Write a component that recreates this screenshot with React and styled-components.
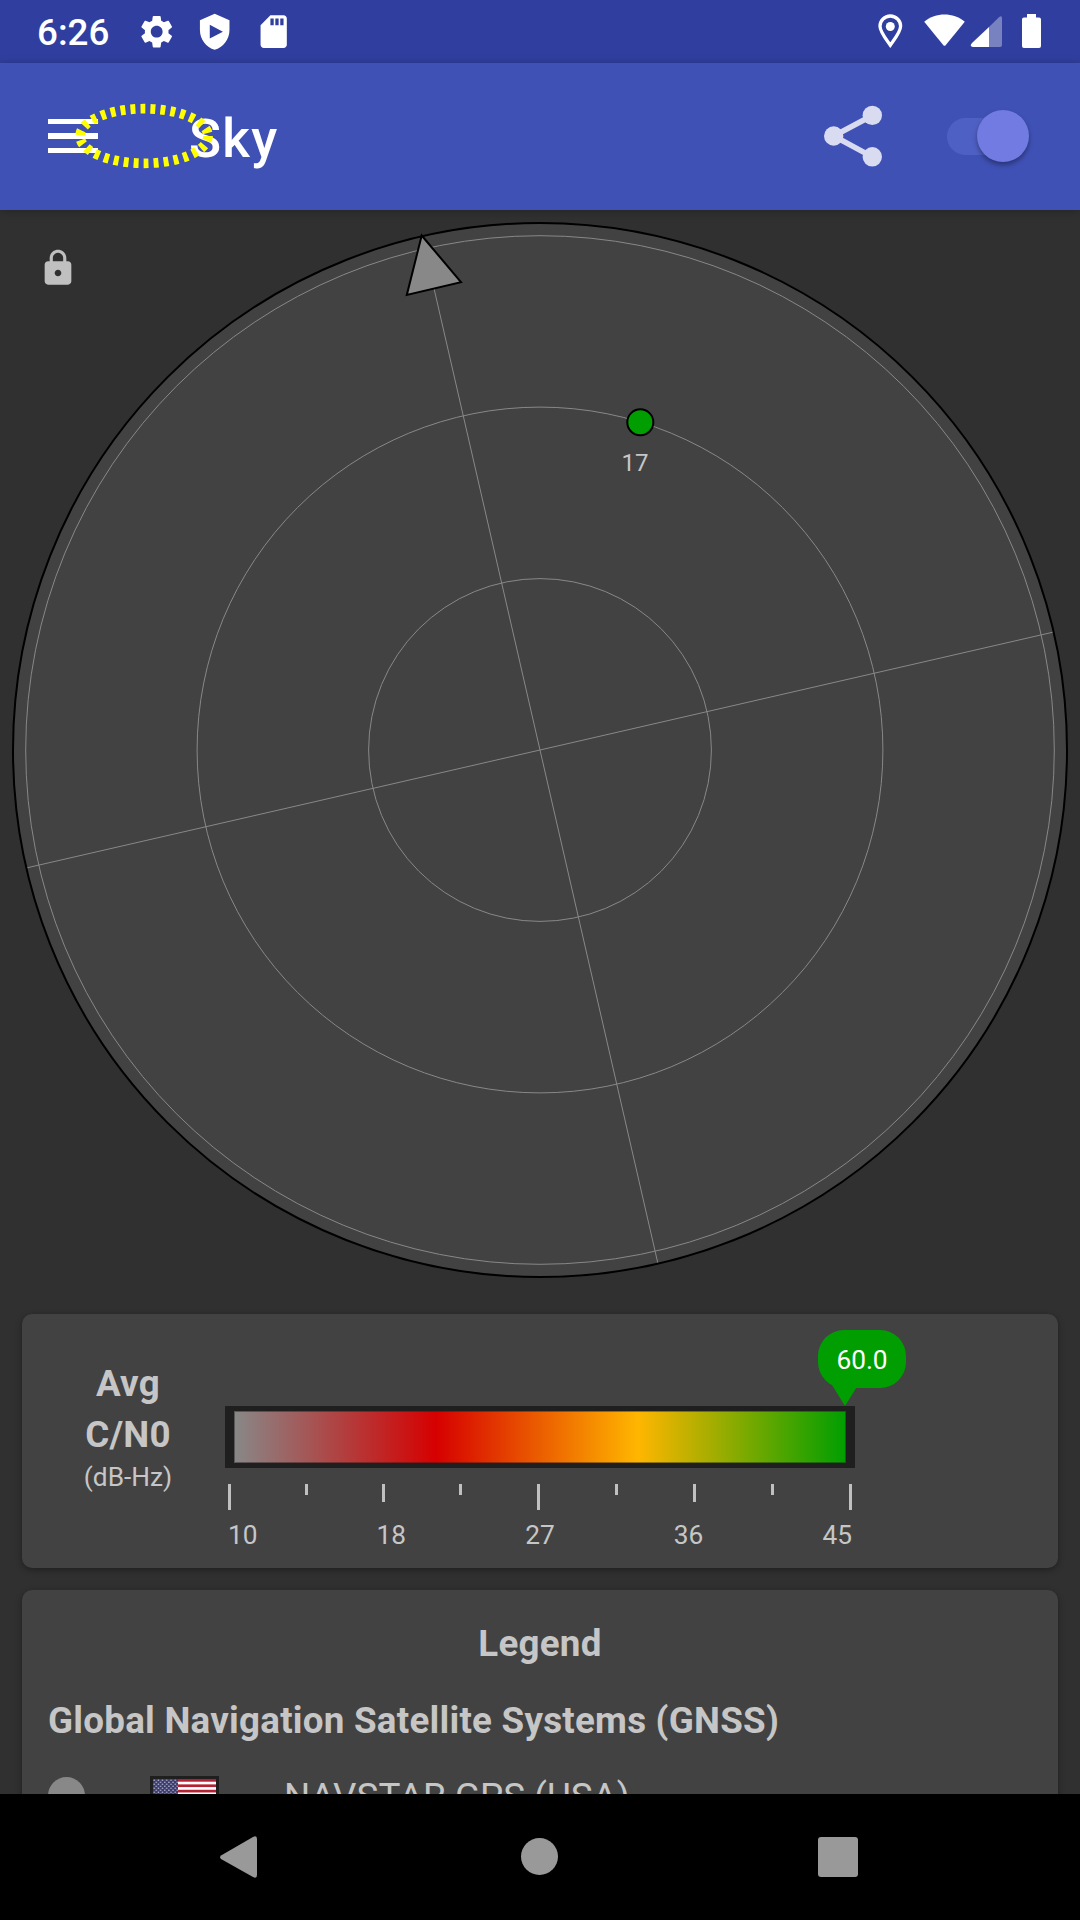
import React from "react";
import styled, { createGlobalStyle } from "styled-components";

const Global = createGlobalStyle`
  * { box-sizing: border-box; }
  body { margin: 0; background: #303030; font-family: Roboto, sans-serif; color: #c6c6c6; }
`;

const Screen = styled.div`
  width: 1080px;
  height: 1920px;
  display: flex;
  flex-direction: column;
  overflow: hidden;
  background: #303030;
`;

const StatusBar = styled.header`
  height: 63px;
  flex: none;
  display: flex;
  align-items: center;
  justify-content: space-between;
  padding: 0 37px 0 37px;
  background: #303f9f;
  color: #fff;
`;

const StatusGroup = styled.div`
  display: flex;
  align-items: center;
  gap: ${(p) => p.$gap || 0}px;
`;

const Clock = styled.span`
  font-size: 36.75px;
  font-weight: 500;
  line-height: 43px;
  width: 81px;
  padding-top: 2px;
`;

const Icon = styled.svg`
  display: block;
  flex: none;
  overflow: visible;
  width: ${(p) => p.$w}px;
  height: ${(p) => p.$h || p.$w}px;
  fill: ${(p) => p.$color || "#fff"};
`;

const AppBar = styled.nav`
  position: relative;
  z-index: 1;
  height: 147px;
  flex: none;
  display: flex;
  align-items: center;
  padding: 0 49px 1px 48px;
  background: #3f51b5;
  box-shadow: 0 1px 8px rgba(0, 0, 0, 0.25);
`;

const MenuIcon = styled.div`
  width: 50px;
  height: 34px;
  display: flex;
  flex-direction: column;
  justify-content: space-between;
`;

const MenuLine = styled.span`
  height: 5.4px;
  background: #fff;
`;

const Title = styled.h1`
  margin: 0 auto 0 91px;
  padding-top: 5px;
  font-size: 53px;
  line-height: 62px;
  font-weight: 500;
  letter-spacing: 1.2px;
  color: #fff;
`;

const Highlight = styled.svg`
  position: absolute;
  left: 70px;
  top: 35px;
  width: 150px;
  height: 76px;
`;

const Switch = styled.div`
  width: 84px;
  height: 37px;
  margin-left: 64px;
  display: flex;
  align-items: center;
  justify-content: flex-end;
  border-radius: 19px;
  background: linear-gradient(90deg, #4f60c4 0 60px, transparent 60px);
`;

const Thumb = styled.span`
  width: 52px;
  height: 52px;
  flex: none;
  margin-right: 2px;
  border-radius: 50%;
  background: #727be2;
  box-shadow: 0 3px 5px rgba(0, 0, 0, 0.35);
`;

const Content = styled.main`
  height: 1584px;
  flex: none;
  overflow: hidden;
  display: flex;
  flex-direction: column;
  gap: 22px;
`;

const SkyArea = styled.section`
  position: relative;
  height: 1082px;
  flex: none;
`;

const SkyChart = styled.svg`
  display: block;
  width: 1080px;
  height: 1080px;
`;

const LockBadge = styled.div`
  position: absolute;
  left: 38px;
  top: 38px;
`;

const Card = styled.section`
  width: 1036px;
  height: ${(p) => p.$h}px;
  flex: none;
  margin: 0 22px;
  border-radius: 10px;
  background: #424242;
  box-shadow: 0 2px 6px rgba(0, 0, 0, 0.35);
`;

const SignalCard = styled(Card)`
  display: flex;
`;

const SignalLabel = styled.div`
  width: 120px;
  margin-left: 46px;
  padding-top: 44px;
  display: flex;
  flex-direction: column;
  align-items: center;
`;

const Strong = styled.span`
  font-size: 36.75px;
  line-height: 51px;
  font-weight: 700;
  letter-spacing: 0.24px;
`;

const Unit = styled.span`
  font-size: 26.25px;
  line-height: 34px;
`;

const Meter = styled.div`
  position: relative;
  width: 630px;
  margin-left: 37px;
  padding-top: 92px;
`;

const GradientBar = styled.div`
  height: 62px;
  padding: 5px 9px;
  background: #1f1f1f;
`;

const GradientFill = styled.div`
  height: 52px;
  border: 1px solid rgba(31, 31, 31, 0.45);
  background: linear-gradient(90deg, #888 0%, #d60000 33%, #ffb600 66%, #009e00 100%) border-box;
`;

const Ticks = styled.div`
  height: 26px;
  margin: 16px 3px 0;
  display: flex;
`;

const Tick = styled.span`
  width: 3px;
  height: ${(p) => p.$h}px;
  margin-left: ${(p) => p.$gap}px;
  background: #c0c0c0;
`;

const Scale = styled.div`
  margin: 9px 3px 0 3px;
  display: flex;
  justify-content: space-between;
  font-size: 26.25px;
  line-height: 32px;
`;

const Bubble = styled.div`
  position: absolute;
  left: 593px;
  top: 16px;
  width: 88px;
  height: 58px;
  border-radius: 26px;
  background: #009e00;
  color: #fff;
  font-size: 26.25px;
  line-height: 60px;
  text-align: center;
  &::after {
    content: "";
    position: absolute;
    left: 14px;
    top: 55px;
    width: 26px;
    height: 21px;
    background: inherit;
    clip-path: polygon(0 0, 100% 0, 50% 100%);
  }
`;

const LegendCard = styled(Card)`
  padding: 32px 26px 0;
`;

const Heading = styled.h2`
  margin: 0;
  font-size: 36.75px;
  line-height: 44px;
  font-weight: 700;
  letter-spacing: 0.24px;
  text-align: ${(p) => p.$align || "left"};
  padding-bottom: ${(p) => p.$gap}px;
`;

const LegendRow = styled.div`
  display: flex;
  align-items: flex-start;
`;

const Dot = styled.span`
  width: 37px;
  height: 37px;
  margin-top: 2px;
  border-radius: 50%;
  background: #888;
`;

const Flag = styled.svg`
  width: 69px;
  height: 41px;
  margin: 1px 65px 0 65px;
  border: 3px solid #1f1f1f;
`;

const LegendText = styled.span`
  font-size: 36.75px;
  line-height: 44px;
  letter-spacing: 0.06px;
`;

const NavBar = styled.footer`
  height: 126px;
  flex: none;
  display: flex;
  align-items: center;
  justify-content: space-between;
  padding: 0 222px 1px 220px;
  background: #000;
`;

const HomeButton = styled.div`
  padding-left: 4px;
`;

const RINGS = [514.3, 342.9, 171.4];
const TICKS = [26, 11, 18, 11, 26, 11, 18, 11, 26];
const SCALE = ["10", "18", "27", "36", "45"];
const STRIPES = [0, 2, 4, 6, 8, 10, 12];

const tickGap = (i) => (i === 0 ? 0 : i < 4 ? 74 : 75);

function Sky() {
  return (
    <SkyChart viewBox="0 210 1080 1080">
      <circle cx="540" cy="750" r="527" fill="#424242" stroke="#000" strokeWidth="2" />
      <g fill="none" stroke="#888" strokeWidth="1">
        {RINGS.map((r) => (
          <circle key={r} cx="540" cy="750" r={r} />
        ))}
        <path d="M422.3 237.5 657.7 1262.5M27.5 867.7 1052.5 632.3" />
      </g>
      <path d="M421.7 235.500 406.800 294.900 461 282.200Z" fill="#888" stroke="#000" strokeWidth="2" />
      <circle cx="640.3" cy="422.3" r="13" fill="#009e00" stroke="#000" strokeWidth="2" />
      <text x="635" y="471" textAnchor="middle" fontSize="24" fill="#c6c6c6">17</text>
    </SkyChart>
  );
}

function UsaFlag() {
  return (
    <Flag viewBox="0 0 63 35" preserveAspectRatio="none">
      <defs>
        <pattern id="stars" width="4.2" height="4" patternUnits="userSpaceOnUse">
          <circle cx="1.2" cy="1.2" r="0.8" fill="#b9b9d2" />
          <circle cx="3.3" cy="3.2" r="0.8" fill="#b9b9d2" />
        </pattern>
      </defs>
      <rect width="63" height="35" fill="#fff" />
      {STRIPES.map((i) => (
        <rect key={i} y={i * 2.69} width="63" height="2.69" fill="#b22234" />
      ))}
      <rect width="25" height="18.8" fill="#3c3b6e" />
      <rect width="25" height="18.8" fill="url(#stars)" />
    </Flag>
  );
}

export default function App() {
  return (
    <Screen>
      <Global />
      <StatusBar>
        <StatusGroup $gap={19}>
          <Clock>6:26</Clock>
          <Icon viewBox="0 0 24 24" $w={39.4}>
            <path d="M19.14 12.94c.04-.3.06-.61.06-.94 0-.32-.02-.64-.07-.94l2.03-1.58c.18-.14.23-.41.12-.61l-1.92-3.32c-.12-.22-.37-.29-.59-.22l-2.39.96c-.5-.38-1.03-.7-1.62-.94l-.36-2.54c-.04-.24-.24-.41-.48-.41h-3.84c-.24 0-.43.17-.47.41l-.36 2.54c-.59.24-1.13.57-1.62.94l-2.39-.96c-.22-.08-.47 0-.59.22L2.74 8.87c-.12.21-.08.47.12.61l2.03 1.58c-.05.3-.09.63-.09.94s.02.64.07.94l-2.03 1.58c-.18.14-.23.41-.12.61l1.92 3.32c.12.22.37.29.59.22l2.39-.96c.5.38 1.03.7 1.62.94l.36 2.54c.05.24.24.41.48.41h3.84c.24 0 .44-.17.47-.41l.36-2.54c.59-.24 1.13-.56 1.62-.94l2.39.96c.22.08.47 0 .59-.22l1.92-3.32c.12-.22.07-.47-.12-.61l-2.01-1.58zM12 15.6c-1.98 0-3.6-1.62-3.6-3.6s1.62-3.6 3.6-3.6 3.6 1.62 3.6 3.6-1.62 3.6-3.6 3.6z" />
          </Icon>
          <Icon viewBox="0 0 24 24" $w={39.4}>
            <path fillRule="evenodd" d="M12 1 3 5v6c0 5.55 3.84 10.74 9 12 5.16-1.26 9-6.45 9-12V5zM9 7.8v8.4l8-4.2z" />
          </Icon>
          <Icon viewBox="0 0 24 24" $w={39.4}>
            <path fillRule="evenodd" d="M18 2h-8L4 8v12c0 1.100.9 2 2 2h12c1.100 0 2-.9 2-2V4c0-1.100-.9-2-2-2zM10 4h2v4h-2zM13 4h2v4h-2zM16 4h2v4h-2z" />
          </Icon>
        </StatusGroup>
        <Icon viewBox="870 0 173 63" $w={173} $h={63}>
          <path fill="none" stroke="#fff" strokeWidth="3.3" d="M890.3 45.200C885.500 38.500 880 31.800 880 26.300a10.300 10.300 0 0 1 20.600 0c0 5.500-5.500 12.200-10.300 18.900z" />
          <circle cx="890.3" cy="26.500" r="4.500" />
          <path d="M924.200 21.700C936 12 953 12 964.800 21.700L945.600 45.200q-1.100 1-2.200 0z" />
          <path d="M989 27 999 17.300q3-2.300 3 1V45q0 2-2 2h-11z" opacity=".35" />
          <path d="M989 27v20h-16q-4-.5-1-4z" />
          <path d="M1027 14h9v3.500h3q2 0 2 2V46q0 2-2 2h-15q-2 0-2-2V19.500q0-2 2-2h3z" />
        </Icon>
      </StatusBar>

      <AppBar>
        <MenuIcon>
          <MenuLine />
          <MenuLine />
          <MenuLine />
        </MenuIcon>
        <Title>Sky</Title>
        <Icon viewBox="825 105 58 62" $w={58} $h={62} $color="#d9dcf0">
          <path d="M872.300 115.500 833.700 136l38.600 20.800" fill="none" stroke="#d9dcf0" strokeWidth="5.500" />
          <circle cx="833.700" cy="136" r="9.700" />
          <circle cx="872.300" cy="115.400" r="9.700" />
          <circle cx="872.300" cy="156.800" r="9.700" />
        </Icon>
        <Switch>
          <Thumb />
        </Switch>
        <Highlight viewBox="70 98 150 76">
          <ellipse cx="144" cy="136" rx="64" ry="27.300" fill="none" stroke="#ff0" strokeWidth="9.700" strokeDasharray="4.900 5.100" />
        </Highlight>
      </AppBar>

      <Content>
        <SkyArea>
          <Sky />
          <LockBadge>
            <Icon viewBox="0 0 24 24" $w={40} $color="#c0c0c0">
              <path d="M18 8h-1V6c0-2.760-2.240-5-5-5S7 3.240 7 6v2H6c-1.100 0-2 .9-2 2v10c0 1.100.9 2 2 2h12c1.100 0 2-.9 2-2V10c0-1.100-.9-2-2-2zm-6 9c-1.100 0-2-.9-2-2s.9-2 2-2 2 .9 2 2-.9 2-2 2zm3.100-9H8.900V6c0-1.710 1.390-3.100 3.100-3.100 1.710 0 3.100 1.390 3.100 3.100v2z" />
            </Icon>
          </LockBadge>
        </SkyArea>

        <SignalCard $h={254}>
          <SignalLabel>
            <Strong>Avg</Strong>
            <Strong>C/N0</Strong>
            <Unit>(dB-Hz)</Unit>
          </SignalLabel>
          <Meter>
            <GradientBar>
              <GradientFill />
            </GradientBar>
            <Ticks>
              {TICKS.map((h, i) => (
                <Tick key={i} $h={h} $gap={tickGap(i)} />
              ))}
            </Ticks>
            <Scale>
              {SCALE.map((v) => (
                <span key={v}>{v}</span>
              ))}
            </Scale>
            <Bubble>60.0</Bubble>
          </Meter>
        </SignalCard>

        <LegendCard $h={400}>
          <Heading $align="center" $gap={33}>Legend</Heading>
          <Heading $gap={32}>Global Navigation Satellite Systems (GNSS)</Heading>
          <LegendRow>
            <Dot />
            <UsaFlag />
            <LegendText>NAVSTAR GPS (USA)</LegendText>
          </LegendRow>
        </LegendCard>
      </Content>

      <NavBar>
        <Icon viewBox="0 0 37 42" $w={37} $h={42} $color="#999">
          <path d="M1 19.500 33 1q4-2 4 2v36q0 4-4 2L1 23q-2-1.700 0-3.500z" />
        </Icon>
        <HomeButton>
          <Icon viewBox="0 0 37 37" $w={37} $color="#999">
            <circle cx="18.500" cy="18.500" r="18.500" />
          </Icon>
        </HomeButton>
        <Icon viewBox="0 0 40 40" $w={40} $color="#999">
          <rect width="40" height="40" rx="3" />
        </Icon>
      </NavBar>
    </Screen>
  );
}
